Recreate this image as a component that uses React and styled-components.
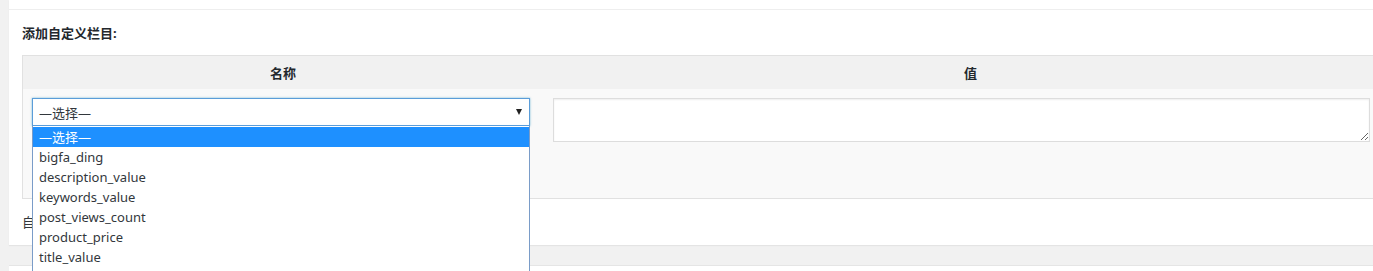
import React from 'react';
import styled, { createGlobalStyle } from 'styled-components';

const GlobalStyle = createGlobalStyle`
  html, body {
    margin: 0;
    padding: 0;
    background: #f1f1f1;
    overflow: hidden;
  }
  body {
    font-family: "Noto Sans", "Noto Sans CJK SC", sans-serif;
    font-size: 13px;
    color: #32373c;
  }
`;

const Page = styled.div`
  width: 1373px;
  height: 271px;
  overflow: hidden;
`;

const Panel = styled.div`
  position: relative;
  margin-left: 9px;
  width: 1400px;
  height: 245px;
  background: #fff;
  box-shadow: 0 1px 1px rgba(0, 0, 0, 0.05);
`;

const TopRule = styled.div`
  height: 9px;
  border-bottom: 1px solid #eeeeee;
`;

const Body = styled.div`
  padding: 13px 0 0 13px;
`;

const Title = styled.div`
  font-weight: 700;
  line-height: 20px;
  color: #23282d;
  margin-bottom: 12px;
`;

const Table = styled.div`
  width: 1375px;
  border: 1px solid #e1e1e1;
  background: #f9f9f9;
`;

const Row = styled.div`
  display: grid;
  grid-template-columns: 520px 1fr;
  background: ${p => (p.head ? '#f1f1f1' : 'transparent')};
  height: ${p => (p.head ? '33px' : '109px')};
  align-items: ${p => (p.head ? 'center' : 'start')};
`;

const HeadCell = styled.div`
  text-align: center;
  font-weight: 600;
  color: #23282d;
`;

const Cell = styled.div`
  position: relative;
  padding: 9px 0 0 ${p => p.pad}px;
`;

const SelectBox = styled.div`
  box-sizing: border-box;
  width: 498px;
  height: 28px;
  border: 1px solid #5b9dd9;
  box-shadow: 0 0 2px rgba(30, 140, 190, 0.6);
  background: #fff;
  display: flex;
  align-items: center;
  justify-content: space-between;
  padding: 0 6px 0 6px;
  color: #32373c;
`;

const Arrow = styled.span`
  width: 0;
  height: 0;
  border-left: 3.5px solid transparent;
  border-right: 3.5px solid transparent;
  border-top: 6px solid #222;
  margin-right: 1px;
`;

const OptionList = styled.ul`
  position: absolute;
  z-index: 5;
  top: 37px;
  left: 9px;
  box-sizing: border-box;
  width: 498px;
  margin: 0;
  padding: 1px 0 12px;
  list-style: none;
  background: #fff;
  border: 1px solid #7a9cc8;
  border-top: none;
`;

const Option = styled.li`
  height: 20px;
  line-height: 20px;
  padding-left: 6px;
  background: ${p => (p.active ? '#1e90ff' : 'transparent')};
  color: ${p => (p.active ? '#fff' : '#32373c')};
`;

const ValueArea = styled.textarea`
  display: block;
  box-sizing: border-box;
  width: 817px;
  height: 44px;
  margin: 0;
  border: 1px solid #dddddd;
  box-shadow: inset 0 1px 2px rgba(0, 0, 0, 0.07);
  background: #fff;
  font: inherit;
  outline: none;
  resize: both;
`;

const Note = styled.p`
  margin: 13px 0 0;
  line-height: 20px;
  color: #32373c;
`;

const NextPanel = styled.div`
  margin: 20px 0 0 9px;
  height: 40px;
  background: #fff;
  border-top: 1px solid #e5e5e5;
`;

const options = [
  '—选择—',
  'bigfa_ding',
  'description_value',
  'keywords_value',
  'post_views_count',
  'product_price',
  'title_value',
];

export default function App() {
  return (
    <Page>
      <GlobalStyle />
      <Panel>
        <TopRule />
        <Body>
          <Title>添加自定义栏目:</Title>
          <Table>
            <Row head>
              <HeadCell>名称</HeadCell>
              <HeadCell>值</HeadCell>
            </Row>
            <Row>
              <Cell pad={9}>
                <SelectBox>
                  <span>—选择—</span>
                  <Arrow />
                </SelectBox>
                <OptionList>
                  {options.map((o, i) => (
                    <Option key={o} active={i === 0}>
                      {o}
                    </Option>
                  ))}
                </OptionList>
              </Cell>
              <Cell pad={10}>
                <ValueArea />
              </Cell>
            </Row>
          </Table>
          <Note>自定义栏目可以用来为您的文章添加额外元数据，您可以在主题中使用它们。</Note>
        </Body>
      </Panel>
      <NextPanel />
    </Page>
  );
}
